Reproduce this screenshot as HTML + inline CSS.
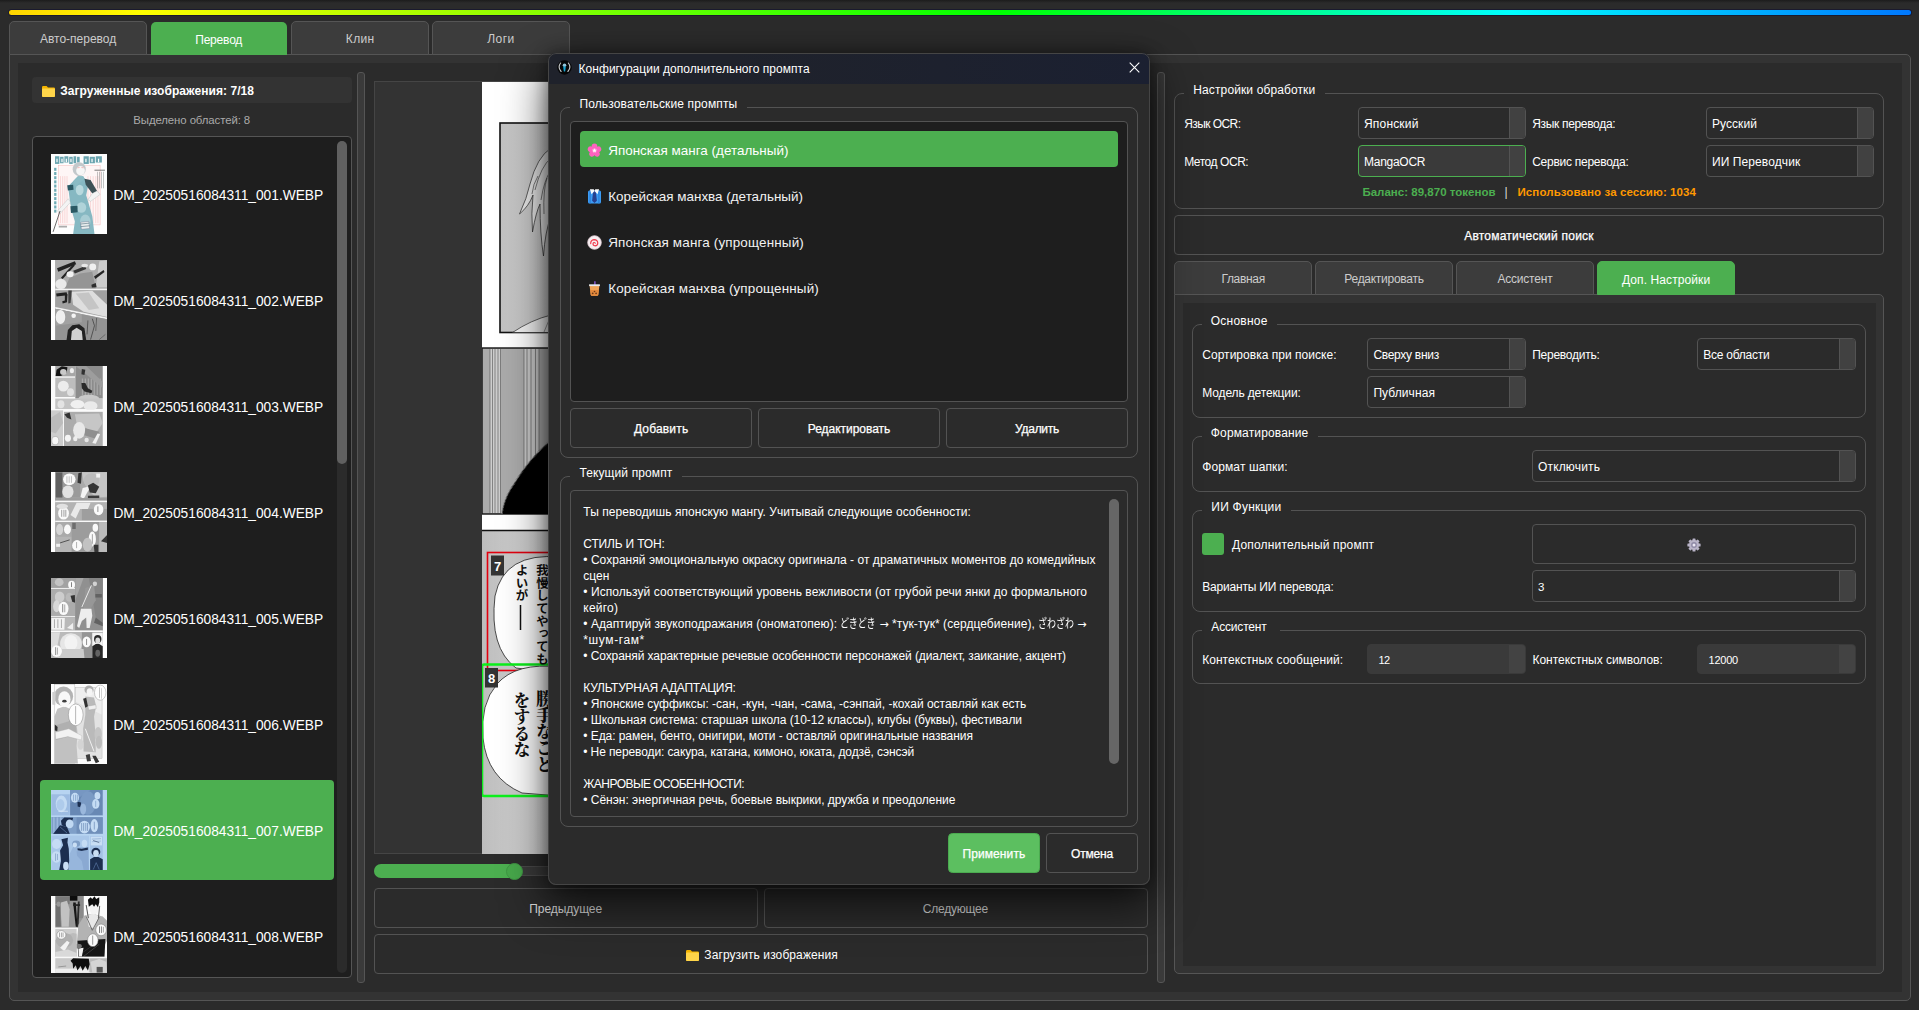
<!DOCTYPE html>
<html lang="ru"><head><meta charset="utf-8"><title>Manga Translator</title>
<style>
html,body{margin:0;padding:0;}
body{width:1919px;height:1010px;overflow:hidden;background:#2b2b2b;font-family:'Liberation Sans','Noto Sans CJK JP',sans-serif;position:relative;}
.a{position:absolute;box-sizing:border-box;}
.t{white-space:pre;}
.k{display:inline-block;width:35.6px;transform:scaleX(.75);transform-origin:0 50%;letter-spacing:0;}
.w{font-family:'DejaVu Sans',sans-serif;font-size:11px;letter-spacing:0;}
</style></head><body>
<div class="a" style="left:0px;top:0px;width:1919px;height:3px;background:linear-gradient(#1c1c1c,#2b2b2b);"></div>
<div class="a" style="left:8px;top:9px;width:1904px;height:7px;background:#1a1a2e;border-radius:3.5px;"></div>
<div class="a" style="left:9px;top:10px;width:1902px;height:5px;border-radius:2.5px;background:linear-gradient(90deg,#ffd400 0%,#ffff00 7%,#00ff00 52%,#00ffff 79%,#0078ff 100%);"></div>
<div class="a" style="left:9px;top:54px;width:1902px;height:947px;background:#333333;border:1px solid #555555;border-radius:5px;border-top-left-radius:0;"></div>
<div class="a" style="left:18px;top:63px;width:1884px;height:929px;background:#2b2b2b;"></div>
<div class="a" style="left:9px;top:21px;width:138px;height:34px;background:#3c3c3c;border:1px solid #555555;border-radius:5px 5px 0 0;"></div>
<div class="a t" style="top:28.5px;height:20px;line-height:20px;font-size:12px;color:#ccc;letter-spacing:-0.012px;left:40px;">Авто-перевод</div>
<div class="a" style="left:150.6px;top:21.6px;width:136.6px;height:33.4px;background:#4caf50;border-radius:5px 5px 0 0;"></div>
<div class="a t" style="top:29.5px;height:20px;line-height:20px;font-size:12px;color:#fff;letter-spacing:-0.185px;left:195.2px;">Перевод</div>
<div class="a" style="left:291px;top:21px;width:138px;height:34px;background:#3c3c3c;border:1px solid #555555;border-radius:5px 5px 0 0;"></div>
<div class="a t" style="top:28.5px;height:20px;line-height:20px;font-size:12px;color:#ccc;letter-spacing:0.357px;left:345.8px;">Клин</div>
<div class="a" style="left:432px;top:21px;width:138px;height:34px;background:#3c3c3c;border:1px solid #555555;border-radius:5px 5px 0 0;"></div>
<div class="a t" style="top:28.5px;height:20px;line-height:20px;font-size:12px;color:#ccc;letter-spacing:0.453px;left:487.2px;">Логи</div>
<div class="a" style="left:32px;top:77px;width:320px;height:26px;background:#333333;border-radius:4px;"></div>
<svg class="a" style="left:41.7px;top:85.5px" width="13" height="11" viewBox="0 0 13 11"><path d="M0 1.2Q0 0 1.2 0H4.6L6 1.4H11.8Q13 1.4 13 2.6V9.8Q13 11 11.8 11H1.2Q0 11 0 9.8Z" fill="#f5b400"/><path d="M0 3.2Q0 2.4 1 2.4H12Q13 2.4 13 3.2V9.8Q13 11 11.8 11H1.2Q0 11 0 9.8Z" fill="#ffd54a"/></svg>
<div class="a t" style="top:80.5px;height:20px;line-height:20px;font-size:12px;color:#fff;font-weight:700;letter-spacing:0.061px;left:60.2px;">Загруженные изображения: 7/18</div>
<div class="a t" style="top:110px;height:20px;line-height:20px;font-size:11.4px;color:#aaa;letter-spacing:-0.092px;left:133.3px;">Выделено областей: 8</div>
<div class="a" style="left:32px;top:136px;width:320px;height:842px;background:#1e1e1e;border:1px solid #555555;border-radius:4px;"></div>
<div class="a" style="left:337px;top:141px;width:10px;height:832px;background:#2b2b2b;border-radius:5px;"></div>
<div class="a" style="left:337px;top:141px;width:10px;height:323px;background:#606060;border-radius:5px;"></div>
<svg width="0" height="0" style="position:absolute"><defs><filter id="bl" x="-5%" y="-5%" width="110%" height="110%"><feGaussianBlur stdDeviation=".45"/></filter><clipPath id="tc"><rect width="56" height="80"/></clipPath></defs></svg>
<svg class="a" style="left:51px;top:154px;background:#fdfdfd" width="56" height="80" viewBox="0 0 56 80"><g clip-path="url(#tc)"><g filter="url(#bl)"><rect x="0.0" y="0.0" width="56.1" height="80.05" fill="#fdfdfd"/><rect x="7.32" y="11.67" width="41.81" height="59.24" fill="#fef6f6"/><g stroke="#f3b4b4" stroke-width=".45" fill="none"><rect x="7.32" y="11.67" width="41.81" height="59.23"/><path d="M9.49 22.13V69.16"/><path d="M11.67 22.13V69.16"/><path d="M13.85 22.13V69.16"/><path d="M16.03 22.13V69.16"/><path d="M36.93 22.13V69.16"/><path d="M39.55 22.13V69.16"/><path d="M42.16 22.13V69.16"/><path d="M44.77 22.13V69.16"/><path d="M46.95 22.13V69.16"/></g><g fill="#2f8190"><rect x="4.01" y="2.26" width="4.35" height="7.67" fill="#2f8190" opacity="0.72"/><rect x="9.06" y="2.79" width="3.48" height="6.44" fill="#2f8190" opacity="0.72"/><rect x="13.41" y="2.26" width="3.92" height="6.28" fill="#2f8190" opacity="0.72"/><rect x="18.21" y="2.79" width="3.48" height="7.14" fill="#2f8190" opacity="0.72"/><rect x="22.56" y="2.26" width="2.61" height="6.97" fill="#2f8190" opacity="0.72"/><rect x="26.05" y="2.79" width="2.61" height="5.75" fill="#2f8190" opacity="0.72"/><rect x="32.58" y="2.26" width="5.22" height="7.67" fill="#2f8190" opacity="0.72"/><rect x="38.68" y="2.79" width="5.22" height="6.44" fill="#2f8190" opacity="0.72"/><rect x="44.77" y="2.26" width="6.1" height="6.28" fill="#2f8190" opacity="0.72"/></g><g fill="#fdfdfd"><rect x="5.4" y="4.7" width="1.22" height="3.49" fill="#fdfdfd"/><rect x="10.37" y="4.7" width="1.22" height="3.49" fill="#fdfdfd"/><rect x="14.72" y="4.7" width="1.22" height="3.49" fill="#fdfdfd"/><rect x="19.34" y="4.7" width="1.22" height="3.49" fill="#fdfdfd"/><rect x="34.32" y="4.7" width="1.22" height="3.49" fill="#fdfdfd"/><rect x="40.42" y="4.7" width="1.22" height="3.49" fill="#fdfdfd"/><rect x="46.95" y="4.7" width="1.22" height="3.49" fill="#fdfdfd"/></g><g fill="#4a96a3"><rect x="3.14" y="13.85" width="2.26" height="2.96" fill="#4a96a3" opacity="0.8"/><rect x="3.14" y="18.03" width="2.26" height="2.96" fill="#4a96a3" opacity="0.8"/><rect x="3.14" y="22.21" width="2.26" height="2.96" fill="#4a96a3" opacity="0.8"/><rect x="3.14" y="26.39" width="2.26" height="2.97" fill="#4a96a3" opacity="0.8"/><rect x="3.14" y="30.57" width="2.26" height="2.97" fill="#4a96a3" opacity="0.8"/><rect x="3.14" y="34.76" width="2.26" height="2.96" fill="#4a96a3" opacity="0.8"/><rect x="3.14" y="38.94" width="2.26" height="2.96" fill="#4a96a3" opacity="0.8"/><rect x="3.14" y="43.12" width="2.26" height="2.96" fill="#4a96a3" opacity="0.8"/><rect x="3.14" y="47.3" width="2.26" height="2.96" fill="#4a96a3" opacity="0.8"/><rect x="3.14" y="51.48" width="2.26" height="2.96" fill="#4a96a3" opacity="0.8"/><rect x="3.14" y="55.66" width="2.26" height="2.96" fill="#4a96a3" opacity="0.8"/></g><rect x="46.08" y="17.77" width="0.78" height="16.55" fill="#777" opacity="0.55"/><rect x="48.08" y="17.77" width="0.79" height="16.55" fill="#777" opacity="0.55"/><rect x="50.09" y="17.77" width="0.78" height="16.55" fill="#777" opacity="0.55"/><rect x="52.09" y="17.77" width="0.78" height="16.55" fill="#777" opacity="0.55"/><rect x="43.47" y="15.59" width="10.45" height="1.31" fill="#555" opacity="0.6"/><ellipse cx="28.22" cy="15.16" rx="6.53" ry="6.97" fill="#c3c8cb"/><ellipse cx="29.53" cy="16.68" rx="4.36" ry="4.57" fill="#f6f6f6"/><polyline points="26.48,13.85 28.66,13.41" fill="none" stroke="#e55" stroke-width="0.4"/><polyline points="30.4,13.41 32.58,13.85" fill="none" stroke="#e55" stroke-width="0.4"/><polygon points="26.92,22.13 32.14,22.13 34.32,25.61 36.93,32.58 35.19,41.29 37.8,50.0 41.29,62.2 43.47,80.05 22.13,80.05 23.87,67.42 20.82,56.97 19.08,48.26 17.77,37.8 16.9,32.58 22.13,27.35" fill="#86b8c2"/><polygon points="22.13,27.35 26.92,22.13 32.14,22.13 33.45,24.74 24.74,32.58" fill="#8bbcc5"/><ellipse cx="28.66" cy="36.06" rx="3.92" ry="5.23" fill="#b9d9de"/><ellipse cx="30.4" cy="53.48" rx="4.79" ry="5.23" fill="#b0d3d9"/><ellipse cx="34.32" cy="67.42" rx="5.23" ry="6.97" fill="#a8cdd4"/><polygon points="33.45,24.74 39.55,26.05 46.08,36.93 41.29,39.55 34.76,30.84" fill="#3d5157"/><polygon points="16.2,31.27 22.13,30.84 22.56,35.63 16.9,36.5" fill="#2a5863"/><polygon points="19.34,52.18 26.48,51.74 26.66,58.28 19.95,58.89" fill="#2a5863"/><polygon points="41.29,39.55 46.08,36.93 49.13,40.42 39.55,47.39 36.93,45.64" fill="#f4f4f4" stroke="#9aa" stroke-width="0.3"/><polygon points="17.33,44.77 19.51,48.26 9.06,59.58 6.45,56.97" fill="#f4f4f4" stroke="#9aa" stroke-width="0.3"/><polyline points="2.09,77.87 9.06,56.97" fill="none" stroke="#444" stroke-width="0.8"/><polygon points="29.53,68.29 37.8,67.42 38.68,74.39 30.4,75.26" fill="#e9eeee" stroke="#557" stroke-width="0.3"/><polyline points="29.53,70.03 38.24,69.16" fill="none" stroke="#356" stroke-width="0.5"/><polyline points="29.79,72.65 38.5,71.78" fill="none" stroke="#356" stroke-width="0.5"/><rect x="7.75" y="71.78" width="8.28" height="1.74" fill="#777" opacity="0.6"/></g></g></svg>
<div class="a t" style="top:185.8px;height:20px;line-height:20px;font-size:13.75px;color:#fff;letter-spacing:-0.007px;left:113.4px;">DM_20250516084311_001.WEBP</div>
<svg class="a" style="left:51px;top:260px;background:#a2a2a2" width="56" height="80" viewBox="0 0 56 80"><g clip-path="url(#tc)"><g filter="url(#bl)"><rect x="0.0" y="0.0" width="56.1" height="80.05" fill="#a2a2a2"/><rect x="0.0" y="0.0" width="4.27" height="80.05" fill="#fff"/><rect x="4.27" y="0.0" width="51.83" height="28.92" fill="#a9a9a9"/><polygon points="13.41,28.92 18.64,17.77 29.09,13.41 41.29,11.67 44.77,28.92" fill="#8f8f8f"/><polygon points="48.26,1.22 56.1,0.35 56.1,27.35 44.77,27.35" fill="#c9c9c9"/><polygon points="6.01,8.19 23.87,1.22 25.17,4.27 7.32,11.67" fill="#161616"/><polygon points="9.93,17.77 22.13,4.27 23.87,5.57 11.67,19.08" fill="#161616"/><polygon points="22.13,10.8 34.32,6.01 35.19,9.06 23.87,13.41" fill="#2a2a2a"/><ellipse cx="19.08" cy="14.29" rx="3.48" ry="3.05" fill="#f2f2f2"/><ellipse cx="41.72" cy="6.88" rx="3.48" ry="3.48" fill="#f0f0f0"/><ellipse cx="33.67" cy="5.57" rx="3.27" ry="1.74" fill="#e6e6e6"/><ellipse cx="9.93" cy="24.09" rx="5.66" ry="5.01" fill="#e9e9e9"/><polygon points="43.03,16.46 52.61,9.93 53.48,12.11 44.34,19.08" fill="#1a1a1a"/><polygon points="40.42,24.74 44.77,23.0 45.64,27.35 40.85,27.53" fill="#222"/><rect x="4.27" y="28.66" width="51.83" height="1.74" fill="#f4f4f4"/><polygon points="4.27,30.4 56.1,30.4 56.1,58.28 4.27,47.39" fill="#9c9c9c"/><polygon points="20.38,31.71 41.29,30.84 56.1,44.77 56.1,56.97 32.58,51.74 22.13,44.77" fill="#dcdcdc"/><polygon points="24.74,33.45 37.8,32.58 48.26,48.26 37.8,50.0" fill="#c2c2c2"/><polygon points="5.14,33.45 15.59,32.14 16.46,35.19 5.57,36.5" fill="#151515"/><polygon points="13.85,34.32 16.46,34.32 16.03,42.16 11.67,43.47 11.24,41.29 13.85,40.42" fill="#151515"/><polygon points="17.33,30.4 20.82,30.4 19.51,43.03 17.33,43.47" fill="#333"/><polygon points="4.27,46.95 56.1,57.4 56.1,59.15 4.27,48.69" fill="#f2f2f2"/><polygon points="4.27,48.69 56.1,59.15 56.1,80.05 4.27,80.05" fill="#8e8e8e"/><polygon points="4.27,48.69 30.84,54.18 30.84,62.2 4.27,65.68" fill="#9d9d9d"/><ellipse cx="9.49" cy="56.97" rx="4.79" ry="6.97" fill="#efefef"/><ellipse cx="22.65" cy="55.75" rx="2.26" ry="2.26" fill="#f4f4f4"/><polygon points="15.59,80.05 16.9,70.03 21.25,65.24 28.22,64.37 33.45,68.29 35.19,80.05" fill="#141414"/><polygon points="19.95,80.05 20.82,70.91 25.61,67.86 30.84,70.91 31.71,80.05" fill="#cfcfcf"/><polyline points="36.93,60.45 36.06,74.39" fill="none" stroke="#222" stroke-width="0.6"/><polyline points="41.29,58.71 43.47,65.68 39.55,79.62" fill="none" stroke="#2a2a2a" stroke-width="0.7"/><polyline points="45.64,57.84 44.77,70.91" fill="none" stroke="#333" stroke-width="0.6"/><polyline points="48.26,79.62 54.36,74.39" fill="none" stroke="#333" stroke-width="0.5"/><rect width="56" height="80" fill="#fff" opacity="0.06"/></g></g></svg>
<div class="a t" style="top:291.8px;height:20px;line-height:20px;font-size:13.75px;color:#fff;letter-spacing:-0.007px;left:113.4px;">DM_20250516084311_002.WEBP</div>
<svg class="a" style="left:51px;top:366px;background:#fbfbfb" width="56" height="80" viewBox="0 0 56 80"><g clip-path="url(#tc)"><g filter="url(#bl)"><rect x="0.0" y="0.0" width="56.1" height="80.05" fill="#fbfbfb"/><rect x="4.27" y="0.0" width="19.77" height="10.37" fill="#a6a6a6"/><polygon points="4.7,9.93 5.57,3.83 10.8,0.35 16.46,1.22 15.59,6.45 9.93,10.1" fill="#151515"/><ellipse cx="12.33" cy="6.01" rx="3.27" ry="3.05" fill="#c9c9c9"/><ellipse cx="20.91" cy="4.7" rx="2.09" ry="2.61" fill="#efefef"/><rect x="4.27" y="11.67" width="19.77" height="19.34" fill="#bdbdbd"/><ellipse cx="12.33" cy="20.17" rx="5.44" ry="5.44" fill="#ececec"/><ellipse cx="19.51" cy="26.05" rx="3.48" ry="3.92" fill="#e2e2e2"/><rect x="24.3" y="0.0" width="27.44" height="32.58" fill="#8c8c8c"/><rect x="30.84" y="12.54" width="1.22" height="16.55" fill="#a9a9a9"/><rect x="33.8" y="12.54" width="1.22" height="16.55" fill="#a9a9a9"/><rect x="36.76" y="12.54" width="1.22" height="16.55" fill="#a9a9a9"/><rect x="39.72" y="12.54" width="1.22" height="16.55" fill="#a9a9a9"/><rect x="42.68" y="12.54" width="1.22" height="16.55" fill="#a9a9a9"/><rect x="45.64" y="12.54" width="1.22" height="16.55" fill="#a9a9a9"/><rect x="48.61" y="12.54" width="1.22" height="16.55" fill="#a9a9a9"/><polygon points="24.3,0.0 35.19,0.0 51.74,16.03 51.74,22.13 30.84,4.7" fill="#9d9d9d"/><polygon points="30.4,16.9 34.32,16.9 36.93,22.13 41.29,24.74 40.42,27.35 33.45,25.61 30.84,22.13" fill="#2b2b2b"/><polygon points="30.84,2.96 34.32,3.83 33.45,9.06 30.4,8.19" fill="#333"/><ellipse cx="37.8" cy="32.8" rx="10.45" ry="4.14" fill="#c9c9c9"/><rect x="4.27" y="32.58" width="47.47" height="10.45" fill="#c4c4c4"/><ellipse cx="26.48" cy="38.24" rx="6.97" ry="4.36" fill="#f0f0f0"/><ellipse cx="39.55" cy="39.98" rx="6.97" ry="4.79" fill="#eaeaea"/><ellipse cx="9.93" cy="38.24" rx="3.48" ry="3.92" fill="#e3e3e3"/><rect x="0.0" y="43.73" width="56.1" height="1.57" fill="#fbfbfb"/><rect x="0.0" y="44.34" width="12.11" height="35.71" fill="#cdcdcd"/><polygon points="0.0,51.74 9.06,45.64 12.11,56.97 4.7,67.42 0.0,65.68" fill="#bcbcbc"/><ellipse cx="4.27" cy="74.61" rx="3.48" ry="4.14" fill="#f7f7f7" stroke="#999" stroke-width=".5"/><rect x="12.98" y="45.82" width="38.76" height="34.23" fill="#acacac"/><polygon points="23.87,48.26 48.26,47.39 51.74,56.97 44.77,67.42 25.61,56.97" fill="#c6c6c6"/><ellipse cx="28.22" cy="64.37" rx="6.1" ry="8.28" fill="#e8e8e8"/><polygon points="13.41,48.26 18.64,46.52 20.38,53.48 16.03,51.74" fill="#333"/><polygon points="34.32,62.2 48.26,65.68 44.77,72.65 33.45,69.16" fill="#8f8f8f"/><ellipse cx="16.9" cy="72.21" rx="3.05" ry="3.48" fill="#f5f5f5"/><ellipse cx="24.3" cy="72.65" rx="2.18" ry="2.61" fill="#ededed"/><ellipse cx="35.63" cy="73.95" rx="2.18" ry="2.18" fill="#e6e6e6"/><polygon points="41.29,77.0 46.52,67.42 49.13,68.29 44.77,77.87" fill="#f0f0f0"/></g></g></svg>
<div class="a t" style="top:397.8px;height:20px;line-height:20px;font-size:13.75px;color:#fff;letter-spacing:-0.007px;left:113.4px;">DM_20250516084311_003.WEBP</div>
<svg class="a" style="left:51px;top:472px;background:#a0a0a0" width="56" height="80" viewBox="0 0 56 80"><g clip-path="url(#tc)"><g filter="url(#bl)"><rect x="0.0" y="0.0" width="56.1" height="80.05" fill="#a0a0a0"/><rect x="0.0" y="0.0" width="4.27" height="80.05" fill="#fff"/><rect x="4.27" y="0.0" width="51.83" height="28.66" fill="#9e9e9e"/><rect x="4.7" y="0.35" width="6.97" height="25.26" fill="#474747"/><rect x="11.67" y="0.35" width="17.42" height="25.26" fill="#8a8a8a"/><ellipse cx="18.34" cy="7.32" rx="6.23" ry="5.92" fill="#fafafa"/><rect x="15.59" y="4.27" width="0.7" height="6.53" fill="#999"/><rect x="17.77" y="4.27" width="0.7" height="6.53" fill="#999"/><rect x="19.95" y="4.27" width="0.69" height="6.53" fill="#999"/><ellipse cx="16.9" cy="19.73" rx="5.66" ry="6.32" fill="#dedede"/><polygon points="30.84,0.35 56.1,0.35 56.1,24.74 44.77,25.61 36.93,17.77 32.58,9.06" fill="#bdbdbd"/><ellipse cx="40.42" cy="8.62" rx="7.84" ry="7.4" fill="#b2b2b2"/><polygon points="27.35,1.22 30.84,0.35 29.97,11.67 26.48,10.8" fill="#151515"/><polygon points="36.93,13.41 42.16,10.8 48.26,14.72 44.77,21.25 38.68,20.38" fill="#141414"/><polygon points="36.93,23.87 48.26,23.43 48.26,27.53 36.93,27.53" fill="#1a1a1a"/><polygon points="29.53,24.74 31.71,16.03 36.93,14.72 37.8,17.77 32.58,26.92" fill="#f3f3f3"/><rect x="45.21" y="1.66" width="3.92" height="3.91" fill="#f1f1f1"/><rect x="4.27" y="26.05" width="51.83" height="2.61" fill="#8d8d8d"/><rect x="4.27" y="28.66" width="51.83" height="1.74" fill="#f7f7f7"/><rect x="4.27" y="30.4" width="51.83" height="18.29" fill="#a7a7a7"/><rect x="30.84" y="36.93" width="25.26" height="11.33" fill="#8f8f8f"/><ellipse cx="12.54" cy="41.29" rx="5.4" ry="6.27" fill="#fafafa"/><rect x="10.37" y="37.8" width="0.78" height="6.97" fill="#777"/><rect x="12.54" y="37.8" width="0.79" height="6.97" fill="#777"/><rect x="14.46" y="37.8" width="0.78" height="6.97" fill="#777"/><ellipse cx="47.6" cy="37.54" rx="4.75" ry="5.66" fill="#fafafa"/><rect x="46.34" y="34.32" width="1.05" height="5.66" fill="#888"/><polygon points="19.51,43.03 25.61,30.84 39.55,30.84 36.93,36.93 29.09,36.93 24.74,46.52" fill="#e6e6e6"/><ellipse cx="11.24" cy="34.32" rx="5.66" ry="2.61" fill="#dcdcdc"/><rect x="4.27" y="48.69" width="51.83" height="1.48" fill="#f7f7f7"/><rect x="4.27" y="50.17" width="51.83" height="29.88" fill="#9c9c9c"/><rect x="20.82" y="50.17" width="27.44" height="29.88" fill="#8c8c8c"/><rect x="48.26" y="50.17" width="7.84" height="29.88" fill="#b2b2b2"/><rect x="4.27" y="64.81" width="16.11" height="15.24" fill="#a9a9a9"/><ellipse cx="8.62" cy="57.4" rx="3.48" ry="5.66" fill="#cfcfcf"/><ellipse cx="16.46" cy="57.4" rx="3.48" ry="4.79" fill="#f8f8f8"/><ellipse cx="44.34" cy="55.75" rx="2.79" ry="4.01" fill="#f8f8f8"/><ellipse cx="41.29" cy="66.99" rx="3.66" ry="7.58" fill="#f8f8f8"/><ellipse cx="26.05" cy="73.52" rx="4.97" ry="5.4" fill="#f8f8f8"/><rect x="40.85" y="62.2" width="1.05" height="9.58" fill="#999"/><rect x="25.17" y="70.03" width="0.88" height="6.1" fill="#999"/><ellipse cx="36.5" cy="72.65" rx="4.79" ry="6.97" fill="#b9b9b9"/><polygon points="42.6,72.65 47.39,72.65 47.39,80.05 43.47,80.05" fill="#141414"/><polygon points="50.0,69.16 56.1,63.07 56.1,70.91" fill="#141414"/><polyline points="9.06,70.91 18.64,67.86" fill="none" stroke="#1a1a1a" stroke-width="0.8"/><rect x="5.14" y="71.78" width="3.92" height="3.05" fill="#eee"/><rect x="21.25" y="50.87" width="3.49" height="6.1" fill="#555"/><rect width="56" height="80" fill="#fff" opacity="0.14"/></g></g></svg>
<div class="a t" style="top:503.79999999999995px;height:20px;line-height:20px;font-size:13.75px;color:#fff;letter-spacing:-0.007px;left:113.4px;">DM_20250516084311_004.WEBP</div>
<svg class="a" style="left:51px;top:578px;background:#9a9a9a" width="56" height="80" viewBox="0 0 56 80"><g clip-path="url(#tc)"><g filter="url(#bl)"><rect x="0.0" y="0.0" width="56.1" height="80.05" fill="#9a9a9a"/><rect x="51.74" y="0.0" width="4.36" height="80.05" fill="#fff"/><rect x="0.0" y="0.0" width="24.04" height="9.93" fill="#9b9b9b"/><ellipse cx="8.19" cy="4.27" rx="4.36" ry="3.92" fill="#bfbfbf"/><ellipse cx="20.6" cy="6.71" rx="3.44" ry="3.92" fill="#fafafa"/><rect x="20.12" y="4.27" width="0.87" height="4.79" fill="#666"/><rect x="0.0" y="9.93" width="24.04" height="1.05" fill="#eee"/><rect x="0.0" y="10.98" width="24.04" height="27.0" fill="#a5a5a5"/><ellipse cx="8.62" cy="19.08" rx="4.79" ry="5.66" fill="#c9c9c9"/><ellipse cx="18.42" cy="19.29" rx="3.7" ry="4.57" fill="#b5b5b5"/><polygon points="19.51,17.77 23.87,16.9 24.04,24.74 21.25,23.87" fill="#222"/><ellipse cx="5.57" cy="28.22" rx="3.48" ry="6.1" fill="#d6d6d6"/><ellipse cx="12.54" cy="30.4" rx="4.97" ry="6.71" fill="#fafafa"/><rect x="11.24" y="26.05" width="0.96" height="8.27" fill="#777"/><rect x="13.41" y="26.48" width="0.79" height="7.84" fill="#888"/><rect x="0.0" y="37.98" width="24.04" height="1.13" fill="#e8e8e8"/><rect x="0.0" y="39.11" width="24.04" height="13.33" fill="#b2b2b2"/><polygon points="0.35,39.98 13.85,39.98 13.41,51.74 0.35,51.74" fill="#f1f1f1"/><rect x="2.96" y="41.29" width="0.87" height="8.71" fill="#999"/><rect x="6.45" y="41.29" width="0.87" height="8.71" fill="#999"/><rect x="9.93" y="41.29" width="0.87" height="8.71" fill="#999"/><polygon points="16.03,50.0 22.13,44.77 22.13,51.74" fill="#eee"/><rect x="24.3" y="0.0" width="27.44" height="52.44" fill="#878787"/><polygon points="24.3,0.0 32.58,0.0 24.3,22.13" fill="#a0a0a0"/><polygon points="37.8,0.0 51.74,0.0 51.74,44.77 44.77,39.55" fill="#7a7a7a"/><polygon points="34.32,9.93 43.03,7.32 44.77,22.13 39.55,30.84 32.58,30.84" fill="#8f8f8f"/><ellipse cx="43.9" cy="5.79" rx="2.18" ry="2.4" fill="#cfcfcf"/><polyline points="40.42,7.32 30.84,29.09" fill="none" stroke="#f0f0f0" stroke-width="0.9"/><rect x="44.34" y="16.03" width="6.53" height="3.48" fill="#555"/><polygon points="29.97,30.84 40.42,30.84 41.29,37.8 38.68,50.0 35.63,50.0 35.19,39.55 30.84,43.03 28.22,50.0 26.05,48.26" fill="#ededed"/><polygon points="44.77,39.55 51.74,44.77 51.74,48.26 43.03,44.77" fill="#555"/><rect x="0.0" y="52.44" width="51.74" height="1.74" fill="#fafafa"/><rect x="0.0" y="54.18" width="51.74" height="25.87" fill="#b5b5b5"/><polygon points="0.0,54.18 9.06,54.18 6.45,67.42 0.0,70.91" fill="#d9d9d9"/><rect x="30.84" y="54.18" width="10.45" height="25.87" fill="#8d8d8d"/><ellipse cx="19.95" cy="65.68" rx="10.89" ry="10.45" fill="#e4e4e4"/><ellipse cx="19.95" cy="64.81" rx="6.53" ry="7.84" fill="#f2f2f2"/><polygon points="6.45,80.05 9.93,70.91 32.58,70.91 33.45,80.05" fill="#c8c8c8"/><ellipse cx="35.67" cy="63.94" rx="4.14" ry="5.4" fill="#fafafa"/><rect x="35.19" y="60.89" width="0.87" height="6.1" fill="#777"/><ellipse cx="5.57" cy="73.08" rx="5.4" ry="5.84" fill="#fafafa"/><rect x="4.27" y="69.16" width="0.87" height="7.84" fill="#777"/><rect x="6.01" y="69.6" width="0.78" height="6.97" fill="#999"/><rect x="41.29" y="55.05" width="10.45" height="25.0" fill="#f3f3f3"/><ellipse cx="46.73" cy="61.11" rx="3.7" ry="4.14" fill="#1a1a1a"/><ellipse cx="46.73" cy="62.63" rx="2.4" ry="3.05" fill="#d9d9d9"/><polygon points="41.29,80.05 41.29,68.29 44.77,66.11 48.26,66.11 51.74,68.29 51.74,80.05" fill="#141414"/><ellipse cx="46.73" cy="75.26" rx="2.4" ry="3.48" fill="#555"/><rect width="56" height="80" fill="#fff" opacity="0.08"/></g></g></svg>
<div class="a t" style="top:609.8px;height:20px;line-height:20px;font-size:13.75px;color:#fff;letter-spacing:-0.007px;left:113.4px;">DM_20250516084311_005.WEBP</div>
<svg class="a" style="left:51px;top:684px;background:#fcfcfc" width="56" height="80" viewBox="0 0 56 80"><g clip-path="url(#tc)"><g filter="url(#bl)"><rect x="0.0" y="0.0" width="56.1" height="80.05" fill="#fcfcfc"/><rect x="24.74" y="3.83" width="26.31" height="70.56" fill="#dedede"/><polygon points="24.74,3.83 51.05,3.83 51.05,30.84 24.74,17.77" fill="#ececec"/><g fill="none" stroke="#888" stroke-width=".3"><rect x="3.4" y="0.35" width="20.47" height="79.27"/><rect x="24.74" y="3.83" width="26.31" height="70.56"/></g><polygon points="3.4,79.62 3.4,32.58 6.45,24.74 13.41,22.13 18.64,24.74 24.74,33.45 26.48,48.26 25.61,62.2 26.92,79.62" fill="#b9b9b9"/><polygon points="4.7,41.29 18.64,36.93 24.74,41.29 26.05,51.74 17.77,52.61 4.7,56.1" fill="#a6a6a6"/><polygon points="4.27,48.26 17.77,44.77 30.84,51.74 30.4,56.1 16.9,52.61 4.7,55.23" fill="#f1f1f1" stroke="#999" stroke-width="0.3"/><polygon points="3.83,40.42 6.62,43.03 6.27,46.95 3.83,46.52" fill="#111"/><ellipse cx="12.54" cy="12.33" rx="9.58" ry="9.8" fill="#a9a9a9"/><ellipse cx="13.41" cy="15.16" rx="6.1" ry="7.84" fill="#f7f7f7"/><ellipse cx="13.41" cy="17.16" rx="2.18" ry="1.31" fill="#222"/><polygon points="1.22,8.19 4.7,7.32 4.27,21.25 1.22,20.38" fill="#c9c9c9"/><ellipse cx="24.74" cy="30.84" rx="7.4" ry="10.89" fill="#fdfdfd" stroke="#777" stroke-width=".5"/><rect x="24.3" y="22.13" width="0.79" height="17.85" fill="#999"/><ellipse cx="38.02" cy="5.66" rx="4.57" ry="4.27" fill="#a2a2a2"/><ellipse cx="38.68" cy="7.97" rx="3.05" ry="3.7" fill="#f4f4f4"/><polygon points="34.32,12.54 43.03,13.41 45.21,22.13 43.03,32.58 44.34,48.26 44.77,68.29 32.58,67.42 32.14,44.77 34.32,30.84" fill="#b1b1b1"/><polygon points="32.14,14.72 35.19,13.85 36.93,22.13 34.32,23.69" fill="#141414"/><polygon points="36.93,22.13 44.77,20.82 45.21,24.74 37.8,26.05" fill="#eee" stroke="#888" stroke-width="0.3"/><polyline points="34.32,44.77 43.03,67.42" fill="none" stroke="#f6f6f6" stroke-width="0.9"/><polygon points="34.76,70.91 38.68,70.03 39.98,77.0 36.06,77.44" fill="#222"/><polygon points="41.29,71.78 44.77,71.78 48.26,77.87 44.77,79.18" fill="#1a1a1a"/><ellipse cx="49.22" cy="8.62" rx="5.75" ry="7.58" fill="#fdfdfd" stroke="#888" stroke-width=".5"/><rect x="48.26" y="3.4" width="0.69" height="10.45" fill="#999"/><rect x="50.17" y="4.27" width="0.61" height="10.45" fill="#aaa"/><ellipse cx="47.17" cy="50.0" rx="3.7" ry="6.97" fill="#bdbdbd"/><ellipse cx="47.91" cy="58.28" rx="3.14" ry="6.53" fill="#b4b4b4"/><ellipse cx="29.53" cy="60.45" rx="3.05" ry="5.23" fill="#cfcfcf"/><rect width="56" height="80" fill="#fff" opacity="0.12"/></g></g></svg>
<div class="a t" style="top:715.8px;height:20px;line-height:20px;font-size:13.75px;color:#fff;letter-spacing:-0.007px;left:113.4px;">DM_20250516084311_006.WEBP</div>
<div class="a" style="left:40px;top:780px;width:294px;height:100px;background:#4caf50;border-radius:4px;"></div>
<svg class="a" style="left:51px;top:790px;background:#b7d4f1" width="56" height="80" viewBox="0 0 56 80"><g clip-path="url(#tc)"><g filter="url(#bl)"><rect x="0.0" y="0.0" width="56.1" height="80.05" fill="#b7d4f1"/><rect x="0.35" y="4.27" width="18.47" height="21.34" fill="#9dbce2"/><ellipse cx="10.37" cy="13.85" rx="5.66" ry="8.28" fill="#c3dbf3"/><ellipse cx="9.49" cy="14.72" rx="3.92" ry="5.66" fill="#aecbeb"/><polyline points="7.32,21.25 16.9,21.25" fill="none" stroke="#dbe9f7" stroke-width="0.8"/><rect x="19.08" y="0.0" width="32.66" height="25.61" fill="#6888b4"/><polygon points="19.08,0.0 39.55,0.0 19.08,13.41" fill="#7797c2"/><ellipse cx="36.93" cy="12.98" rx="7.84" ry="11.76" fill="#7a9ac4"/><ellipse cx="23.95" cy="7.75" rx="4.01" ry="4.97" fill="#c5dcf4"/><rect x="22.13" y="4.7" width="0.69" height="6.1" fill="#7f9fc8"/><rect x="24.04" y="4.7" width="0.7" height="6.1" fill="#7f9fc8"/><rect x="25.87" y="4.7" width="0.7" height="6.1" fill="#7f9fc8"/><ellipse cx="46.39" cy="5.66" rx="2.92" ry="3.57" fill="#c5dcf4"/><ellipse cx="44.77" cy="13.94" rx="3.66" ry="4.88" fill="#c5dcf4"/><rect x="44.43" y="10.8" width="0.69" height="6.1" fill="#7f9fc8"/><polygon points="26.48,11.67 30.14,12.54 29.53,17.33 26.66,16.46" fill="#1b2d4f"/><ellipse cx="32.14" cy="19.08" rx="3.05" ry="5.66" fill="#9ab7dc"/><rect x="0.0" y="25.61" width="51.74" height="1.39" fill="#b7d4f1"/><rect x="0.35" y="27.0" width="51.39" height="16.9" fill="#7f9fc8"/><rect x="2.09" y="27.35" width="1.57" height="16.38" fill="#9bb8dd"/><rect x="5.57" y="27.35" width="1.57" height="16.38" fill="#9bb8dd"/><rect x="9.06" y="27.35" width="1.57" height="16.38" fill="#9bb8dd"/><rect x="25.61" y="27.35" width="26.13" height="16.38" fill="#6f8fba"/><polygon points="9.93,30.84 13.41,27.53 22.13,27.79 21.25,30.84 17.77,32.58 15.16,36.93 10.8,35.19" fill="#1b2d4f"/><ellipse cx="18.64" cy="33.89" rx="3.92" ry="4.36" fill="#c0d8f2"/><polygon points="2.09,43.9 9.06,35.19 16.03,36.93 18.82,43.9" fill="#1b2d4f"/><polyline points="9.06,36.93 16.03,43.03" fill="none" stroke="#7f9fc8" stroke-width="0.5"/><ellipse cx="33.45" cy="37.06" rx="5.4" ry="6.4" fill="#c5dcf4"/><rect x="30.4" y="33.01" width="0.7" height="7.84" fill="#6888b4"/><rect x="32.4" y="33.01" width="0.7" height="7.84" fill="#6888b4"/><rect x="34.49" y="33.01" width="0.7" height="7.84" fill="#6888b4"/><rect x="36.32" y="33.01" width="0.7" height="7.84" fill="#6888b4"/><ellipse cx="43.34" cy="35.63" rx="3.79" ry="6.71" fill="#c5dcf4"/><rect x="42.86" y="31.71" width="0.69" height="7.84" fill="#6888b4"/><rect x="0.0" y="43.9" width="51.74" height="1.74" fill="#b7d4f1"/><rect x="0.35" y="45.64" width="37.89" height="34.41" fill="#a9c7e9"/><polygon points="17.77,80.05 18.64,63.94 22.13,56.97 38.24,56.97 38.24,80.05" fill="#97b6dc"/><ellipse cx="5.57" cy="53.92" rx="4.53" ry="4.97" fill="#c5dcf4"/><ellipse cx="5.31" cy="66.99" rx="4.79" ry="5.84" fill="#c5dcf4"/><rect x="4.27" y="63.5" width="0.78" height="7.41" fill="#7f9fc8"/><rect x="6.27" y="63.94" width="0.7" height="6.09" fill="#7f9fc8"/><polygon points="10.37,49.13 16.9,47.82 16.46,52.61 17.77,58.71 18.21,70.91 17.33,80.05 8.19,80.05 9.93,70.91 9.06,60.45 12.11,55.23" fill="#1b2d4f"/><ellipse cx="14.94" cy="75.91" rx="2.83" ry="4.14" fill="#c9def4"/><ellipse cx="25.17" cy="53.7" rx="3.92" ry="3.27" fill="#7f9fc8"/><ellipse cx="23.87" cy="55.01" rx="2.18" ry="2.4" fill="#c9def4"/><polygon points="26.48,58.28 30.84,58.71 36.93,57.4 36.76,60.02 30.84,60.89 26.66,60.28" fill="#1b2d4f"/><polygon points="25.61,61.32 36.93,60.45 37.8,80.05 32.58,80.05 30.84,70.91 26.05,65.68" fill="#8aa9d2"/><ellipse cx="33.45" cy="53.48" rx="2.79" ry="3.66" fill="#c5dcf4"/><rect x="38.24" y="45.64" width="0.87" height="34.41" fill="#b7d4f1"/><rect x="39.11" y="46.08" width="12.63" height="33.97" fill="#a4c2e6"/><rect x="39.72" y="46.69" width="11.33" height="8.71" fill="#c9def4"/><polyline points="40.85,49.13 50.0,48.69" fill="none" stroke="#7f9fc8" stroke-width="0.6"/><polyline points="40.85,51.74 50.0,51.05" fill="none" stroke="#7f9fc8" stroke-width="0.5"/><polyline points="42.16,50.44 48.26,52.61" fill="none" stroke="#1b2d4f" stroke-width="0.5"/><ellipse cx="44.86" cy="61.89" rx="4.44" ry="4.22" fill="#1b2d4f"/><ellipse cx="44.99" cy="63.37" rx="2.83" ry="3.35" fill="#c9def4"/><polygon points="39.11,80.05 39.11,69.16 43.03,66.99 47.39,66.99 51.74,69.16 51.74,80.05" fill="#1b2d4f"/><polyline points="42.16,79.62 45.21,72.65 48.26,79.62" fill="none" stroke="#5f7fab" stroke-width="0.6"/></g></g></svg>
<div class="a t" style="top:821.8px;height:20px;line-height:20px;font-size:13.75px;color:#fff;letter-spacing:-0.007px;left:113.4px;">DM_20250516084311_007.WEBP</div>
<div class="a" style="left:33px;top:886px;width:318px;height:87px;overflow:hidden;"><div class="a" style="left:-33px;top:-886px;width:400px;height:1010px;">
<svg class="a" style="left:51px;top:896px;background:#fbfbfb" width="56" height="80" viewBox="0 0 56 80"><g clip-path="url(#tc)"><g filter="url(#bl)"><rect x="0.0" y="0.0" width="56.1" height="76.57" fill="#fbfbfb"/><rect x="4.27" y="0.0" width="28.31" height="31.71" fill="#979797"/><rect x="4.7" y="0.35" width="13.94" height="7.84" fill="#7a7a7a"/><rect x="18.82" y="0.0" width="7.84" height="4.7" fill="#111"/><rect x="26.66" y="0.0" width="5.92" height="22.13" fill="#8a8a8a"/><polygon points="9.93,6.45 16.03,4.7 18.64,13.41 17.77,30.84 10.8,30.84 9.93,17.77" fill="#c2c2c2"/><polygon points="4.7,9.06 9.06,6.45 9.93,30.84 4.7,30.84" fill="#6f6f6f"/><ellipse cx="7.67" cy="8.19" rx="2.26" ry="2.61" fill="#999"/><polygon points="22.13,6.45 24.74,6.45 26.48,30.84 24.74,30.84" fill="#161616"/><polygon points="26.92,5.57 28.66,5.57 27.53,30.84 25.61,30.84" fill="#2a2a2a"/><rect x="22.13" y="8.19" width="6.96" height="1.74" fill="#222"/><rect x="4.27" y="31.71" width="21.34" height="1.3" fill="#f5f5f5"/><polygon points="25.61,50.0 27.35,29.09 33.45,19.51 41.29,17.77 51.74,20.38 56.1,24.74 56.1,44.77 51.74,51.74" fill="#b3b3b3"/><polygon points="35.19,19.51 41.29,17.77 48.26,19.95 43.03,32.58 37.8,30.84" fill="#e8e8e8"/><polyline points="35.19,20.38 41.29,34.32 48.26,21.25" fill="none" stroke="#666" stroke-width="0.9"/><ellipse cx="43.03" cy="12.54" rx="4.36" ry="6.1" fill="#f3f3f3"/><polygon points="37.8,10.8 36.93,3.83 39.55,1.22 41.29,2.96 43.47,0.17 45.21,2.96 48.26,1.22 48.26,6.45 46.95,11.24 44.77,8.19 43.03,10.8 41.29,8.19" fill="#111"/><polyline points="35.19,9.06 37.37,22.13" fill="none" stroke="#555" stroke-width="1"/><polyline points="48.69,9.93 47.39,22.13" fill="none" stroke="#666" stroke-width="1"/><polygon points="26.48,44.77 54.36,43.03 53.48,61.32 27.35,61.32" fill="#151515"/><polyline points="32.58,60.45 48.26,48.26" fill="none" stroke="#666" stroke-width="0.5"/><polyline points="30.84,56.97 44.77,47.39" fill="none" stroke="#555" stroke-width="0.4"/><polygon points="27.35,52.61 32.58,51.74 30.84,60.45 27.79,60.45" fill="#f2f2f2"/><ellipse cx="27.13" cy="50.22" rx="3.7" ry="2.4" fill="#777"/><ellipse cx="50.09" cy="33.89" rx="5.31" ry="5.84" fill="#fbfbfb" stroke="#777" stroke-width=".5"/><rect x="48.26" y="30.4" width="0.78" height="6.53" fill="#555"/><rect x="50.17" y="30.4" width="0.7" height="6.53" fill="#666"/><rect x="51.92" y="30.84" width="0.61" height="5.66" fill="#777"/><ellipse cx="41.81" cy="44.21" rx="5.31" ry="6.4" fill="#fbfbfb" stroke="#777" stroke-width=".5"/><rect x="41.29" y="39.55" width="0.87" height="9.14" fill="#888"/><rect x="4.27" y="33.01" width="21.34" height="27.62" fill="#cdcdcd"/><polygon points="4.27,44.77 13.41,39.55 22.13,36.93 25.61,37.8 25.61,60.63 4.27,60.63" fill="#bcbcbc"/><ellipse cx="13.41" cy="44.34" rx="8.71" ry="7.4" fill="#b0b0b0"/><polygon points="9.06,51.74 16.03,44.77 18.64,46.52 13.41,55.23" fill="#f3f3f3"/><polygon points="4.27,56.1 16.9,53.48 25.61,56.97 25.61,60.63 4.27,60.63" fill="#d9d9d9"/><ellipse cx="10.37" cy="38.89" rx="4.53" ry="4.31" fill="#fbfbfb" stroke="#777" stroke-width=".5"/><rect x="8.19" y="36.5" width="0.7" height="4.79" fill="#888"/><rect x="9.93" y="36.5" width="0.7" height="4.79" fill="#888"/><rect x="11.67" y="36.5" width="0.7" height="4.79" fill="#888"/><rect x="4.27" y="60.63" width="51.83" height="1.57" fill="#f8f8f8"/><rect x="4.27" y="62.2" width="51.83" height="14.37" fill="#c9c9c9"/><rect x="4.27" y="72.65" width="33.53" height="3.92" fill="#ededed"/><polygon points="19.51,64.81 22.13,62.2 37.8,62.63 38.68,68.29 36.93,74.39 34.32,70.03 31.71,74.83 29.53,70.03 26.48,74.39 24.74,69.16 22.13,72.65 21.69,67.42" fill="#111"/><rect x="39.11" y="62.63" width="16.99" height="13.94" fill="#b9b9b9"/><polygon points="39.55,65.68 48.26,63.07 55.23,65.68 56.1,76.57 41.29,76.57" fill="#d4d4d4"/><rect x="45.64" y="70.91" width="6.1" height="5.66" fill="#555"/><polyline points="7.32,70.91 15.16,70.03" fill="none" stroke="#666" stroke-width="0.5"/></g></g></svg>
<div class="a t" style="top:927.8px;height:20px;line-height:20px;font-size:13.75px;color:#fff;letter-spacing:-0.007px;left:113.4px;">DM_20250516084311_008.WEBP</div>
</div></div>
<div class="a" style="left:357px;top:72px;width:8px;height:911px;background:#3a3a3a;border:1px solid #555;border-radius:3px;"></div>
<div class="a" style="left:1157px;top:72px;width:8px;height:911px;background:#3a3a3a;border:1px solid #555;border-radius:3px;"></div>
<div class="a" style="left:374px;top:81px;width:774px;height:773px;background:#333333;border:1px solid #454545;"></div>
<!--PAGE-->
<div class="a" style="left:374px;top:866px;width:774px;height:10px;background:#3a3a3a;border:1px solid #4a4a4a;border-radius:5px;"></div>
<div class="a" style="left:374px;top:864px;width:142px;height:14px;background:#4caf50;border-radius:7px;"></div>
<div class="a" style="left:505.5px;top:862.5px;width:17px;height:17px;background:#47a84b;border:1px solid #3f9643;border-radius:8.5px;"></div>
<div class="a" style="left:374px;top:888px;width:384px;height:40px;background:#2b2b2b;border:1px solid #535353;border-radius:4px;"></div>
<div class="a t" style="top:899px;height:20px;line-height:20px;font-size:12px;color:#ddd;letter-spacing:-0.049px;left:529.2px;">Предыдущее</div>
<div class="a" style="left:764px;top:888px;width:384px;height:40px;background:#2b2b2b;border:1px solid #535353;border-radius:4px;"></div>
<div class="a t" style="top:899px;height:20px;line-height:20px;font-size:12px;color:#ddd;letter-spacing:-0.221px;left:922.8px;">Следующее</div>
<div class="a" style="left:374px;top:934px;width:774px;height:40px;background:#2b2b2b;border:1px solid #535353;border-radius:4px;"></div>
<svg class="a" style="left:686.2px;top:949.8px" width="13" height="11" viewBox="0 0 13 11"><path d="M0 1.2Q0 0 1.2 0H4.6L6 1.4H11.8Q13 1.4 13 2.6V9.8Q13 11 11.8 11H1.2Q0 11 0 9.8Z" fill="#f5b400"/><path d="M0 3.2Q0 2.4 1 2.4H12Q13 2.4 13 3.2V9.8Q13 11 11.8 11H1.2Q0 11 0 9.8Z" fill="#ffd54a"/></svg>
<div class="a t" style="top:945px;height:20px;line-height:20px;font-size:12px;color:#fff;letter-spacing:0.094px;left:704.3px;">Загрузить изображения</div>
<div class="a" style="left:1174px;top:93px;width:710px;height:116px;border:1px solid #535353;border-radius:8px;"></div>
<div class="a" style="left:1184px;top:91px;width:141px;height:5px;background:#2b2b2b;"></div>
<div class="a t" style="top:80px;height:20px;line-height:20px;font-size:12px;color:#fff;letter-spacing:0.116px;left:1193.3px;">Настройки обработки</div>
<div class="a t" style="top:114px;height:20px;line-height:20px;font-size:12px;color:#fff;letter-spacing:-0.574px;left:1184.2px;">Язык OCR:</div>
<div class="a" style="left:1358px;top:107px;width:168px;height:32px;background:#2b2b2b;border:1px solid #535353;border-radius:4px;"></div>
<div class="a" style="left:1509px;top:108px;width:16px;height:30px;background:#414141;border-radius:0 3px 3px 0;border-left:1px solid #535353;"></div>
<div class="a t" style="top:113.5px;height:20px;line-height:20px;font-size:12px;color:#fff;letter-spacing:0.182px;left:1364px;">Японский</div>
<div class="a t" style="top:114px;height:20px;line-height:20px;font-size:12px;color:#fff;letter-spacing:-0.320px;left:1532.2px;">Язык перевода:</div>
<div class="a" style="left:1706px;top:107px;width:168px;height:32px;background:#2b2b2b;border:1px solid #535353;border-radius:4px;"></div>
<div class="a" style="left:1857px;top:108px;width:16px;height:30px;background:#414141;border-radius:0 3px 3px 0;border-left:1px solid #535353;"></div>
<div class="a t" style="top:113.5px;height:20px;line-height:20px;font-size:12px;color:#fff;letter-spacing:0.061px;left:1712px;">Русский</div>
<div class="a t" style="top:152px;height:20px;line-height:20px;font-size:12px;color:#fff;letter-spacing:-0.446px;left:1184.2px;">Метод OCR:</div>
<div class="a" style="left:1358px;top:145px;width:168px;height:32px;background:#3a3a3a;border:1px solid #4caf50;border-radius:4px;"></div>
<div class="a" style="left:1509px;top:146px;width:16px;height:30px;background:#414141;border-radius:0 3px 3px 0;border-left:1px solid #535353;"></div>
<div class="a t" style="top:151.5px;height:20px;line-height:20px;font-size:12px;color:#fff;letter-spacing:-0.266px;left:1364px;">MangaOCR</div>
<div class="a t" style="top:152px;height:20px;line-height:20px;font-size:12px;color:#fff;letter-spacing:-0.267px;left:1532.2px;">Сервис перевода:</div>
<div class="a" style="left:1706px;top:145px;width:168px;height:32px;background:#2b2b2b;border:1px solid #535353;border-radius:4px;"></div>
<div class="a" style="left:1857px;top:146px;width:16px;height:30px;background:#414141;border-radius:0 3px 3px 0;border-left:1px solid #535353;"></div>
<div class="a t" style="top:151.5px;height:20px;line-height:20px;font-size:12px;color:#fff;letter-spacing:0.092px;left:1712px;">ИИ Переводчик</div>
<div class="a t" style="top:182px;height:20px;line-height:20px;font-size:11.5px;color:#4caf50;font-weight:700;letter-spacing:0.019px;left:1362.4px;">Баланс: 89,870 токенов</div>
<div class="a t" style="top:182px;height:20px;line-height:20px;font-size:12px;color:#ddd;left:1504.5px;">|</div>
<div class="a t" style="top:182px;height:20px;line-height:20px;font-size:11.5px;color:#ff9800;font-weight:700;letter-spacing:0.102px;left:1517.5px;">Использовано за сессию: 1034</div>
<div class="a" style="left:1174px;top:215px;width:710px;height:40px;background:#2b2b2b;border:1px solid #535353;border-radius:4px;"></div>
<div class="a t" style="top:226px;height:20px;line-height:20px;font-size:12px;color:#fff;letter-spacing:0.228px;left:1464.2px;-webkit-text-stroke:.25px #fff;">Автоматический поиск</div>
<div class="a" style="left:1174px;top:294px;width:710px;height:680px;background:#333333;border:1px solid #555555;border-radius:5px;border-top-left-radius:0;"></div>
<div class="a" style="left:1183px;top:303px;width:693px;height:663px;background:#2b2b2b;"></div>
<div class="a" style="left:1174px;top:261px;width:138px;height:34px;background:#3c3c3c;border:1px solid #555555;border-radius:5px 5px 0 0;"></div>
<div class="a t" style="top:269px;height:20px;line-height:20px;font-size:12px;color:#ccc;letter-spacing:-0.315px;left:1221.4px;">Главная</div>
<div class="a" style="left:1315px;top:261px;width:138px;height:34px;background:#3c3c3c;border:1px solid #555555;border-radius:5px 5px 0 0;"></div>
<div class="a t" style="top:269px;height:20px;line-height:20px;font-size:12px;color:#ccc;letter-spacing:-0.276px;left:1344.3px;">Редактировать</div>
<div class="a" style="left:1456px;top:261px;width:138px;height:34px;background:#3c3c3c;border:1px solid #555555;border-radius:5px 5px 0 0;"></div>
<div class="a t" style="top:269px;height:20px;line-height:20px;font-size:12px;color:#ccc;letter-spacing:-0.197px;left:1497.4px;">Ассистент</div>
<div class="a" style="left:1597px;top:261px;width:138px;height:34px;background:#4caf50;border:1px solid #4caf50;border-radius:5px 5px 0 0;"></div>
<div class="a t" style="top:270px;height:20px;line-height:20px;font-size:12px;color:#fff;letter-spacing:0.088px;left:1622px;">Доп. Настройки</div>
<div class="a" style="left:1192px;top:324px;width:674px;height:94px;border:1px solid #535353;border-radius:8px;"></div>
<div class="a" style="left:1201.5px;top:322px;width:75.7px;height:5px;background:#2b2b2b;"></div>
<div class="a t" style="top:311px;height:20px;line-height:20px;font-size:12px;color:#fff;letter-spacing:0.231px;left:1210.8px;">Основное</div>
<div class="a t" style="top:345px;height:20px;line-height:20px;font-size:12px;color:#fff;letter-spacing:0.025px;left:1202.3px;">Сортировка при поиске:</div>
<div class="a" style="left:1367px;top:338px;width:159px;height:32px;background:#2b2b2b;border:1px solid #535353;border-radius:4px;"></div>
<div class="a" style="left:1509px;top:339px;width:16px;height:30px;background:#414141;border-radius:0 3px 3px 0;border-left:1px solid #535353;"></div>
<div class="a t" style="top:344.5px;height:20px;line-height:20px;font-size:12px;color:#fff;letter-spacing:-0.287px;left:1373.4px;">Сверху вниз</div>
<div class="a t" style="top:345px;height:20px;line-height:20px;font-size:12px;color:#fff;letter-spacing:-0.249px;left:1532.2px;">Переводить:</div>
<div class="a" style="left:1697px;top:338px;width:159px;height:32px;background:#2b2b2b;border:1px solid #535353;border-radius:4px;"></div>
<div class="a" style="left:1839px;top:339px;width:16px;height:30px;background:#414141;border-radius:0 3px 3px 0;border-left:1px solid #535353;"></div>
<div class="a t" style="top:344.5px;height:20px;line-height:20px;font-size:12px;color:#fff;letter-spacing:-0.251px;left:1703.3px;">Все области</div>
<div class="a t" style="top:383px;height:20px;line-height:20px;font-size:12px;color:#fff;letter-spacing:-0.140px;left:1202.3px;">Модель детекции:</div>
<div class="a" style="left:1367px;top:376px;width:159px;height:32px;background:#2b2b2b;border:1px solid #535353;border-radius:4px;"></div>
<div class="a" style="left:1509px;top:377px;width:16px;height:30px;background:#414141;border-radius:0 3px 3px 0;border-left:1px solid #535353;"></div>
<div class="a t" style="top:382.5px;height:20px;line-height:20px;font-size:12px;color:#fff;letter-spacing:0.080px;left:1373.4px;">Публичная</div>
<div class="a" style="left:1192px;top:436px;width:674px;height:56px;border:1px solid #535353;border-radius:8px;"></div>
<div class="a" style="left:1201.5px;top:434px;width:116.6px;height:5px;background:#2b2b2b;"></div>
<div class="a t" style="top:423px;height:20px;line-height:20px;font-size:12px;color:#fff;letter-spacing:0.145px;left:1210.8px;">Форматирование</div>
<div class="a t" style="top:457px;height:20px;line-height:20px;font-size:12px;color:#fff;letter-spacing:0.113px;left:1202.2px;">Формат шапки:</div>
<div class="a" style="left:1532px;top:450px;width:324px;height:32px;background:#2b2b2b;border:1px solid #535353;border-radius:4px;"></div>
<div class="a" style="left:1839px;top:451px;width:16px;height:30px;background:#414141;border-radius:0 3px 3px 0;border-left:1px solid #535353;"></div>
<div class="a t" style="top:456.5px;height:20px;line-height:20px;font-size:12px;color:#fff;letter-spacing:0.155px;left:1538px;">Отключить</div>
<div class="a" style="left:1192px;top:510px;width:674px;height:102px;border:1px solid #535353;border-radius:8px;"></div>
<div class="a" style="left:1202px;top:508px;width:89px;height:5px;background:#2b2b2b;"></div>
<div class="a t" style="top:497px;height:20px;line-height:20px;font-size:12px;color:#fff;letter-spacing:0.225px;left:1211.3px;">ИИ Функции</div>
<div class="a" style="left:1202px;top:533px;width:22px;height:22px;background:#4caf50;border-radius:3px;"></div>
<div class="a t" style="top:535px;height:20px;line-height:20px;font-size:12px;color:#fff;letter-spacing:0.182px;left:1232px;">Дополнительный промпт</div>
<div class="a" style="left:1532px;top:524px;width:324px;height:40px;background:#2b2b2b;border:1px solid #535353;border-radius:4px;"></div>
<svg class="a" style="left:1687px;top:537.8px" width="14" height="14" viewBox="-7 -7 14 14"><g fill="#b9b4c8"><rect x="-1.5" y="-6.6" width="3" height="3" rx=".6" transform="rotate(0)"/><rect x="-1.5" y="-6.6" width="3" height="3" rx=".6" transform="rotate(45)"/><rect x="-1.5" y="-6.6" width="3" height="3" rx=".6" transform="rotate(90)"/><rect x="-1.5" y="-6.6" width="3" height="3" rx=".6" transform="rotate(135)"/><rect x="-1.5" y="-6.6" width="3" height="3" rx=".6" transform="rotate(180)"/><rect x="-1.5" y="-6.6" width="3" height="3" rx=".6" transform="rotate(225)"/><rect x="-1.5" y="-6.6" width="3" height="3" rx=".6" transform="rotate(270)"/><rect x="-1.5" y="-6.6" width="3" height="3" rx=".6" transform="rotate(315)"/><circle r="5"/></g><circle r="2.9" fill="#8f8aa6"/><circle r="1.5" fill="#e9e6f2"/></svg>
<div class="a t" style="top:577px;height:20px;line-height:20px;font-size:12px;color:#fff;letter-spacing:-0.194px;left:1202.2px;">Варианты ИИ перевода:</div>
<div class="a" style="left:1532px;top:570px;width:324px;height:32px;background:#2b2b2b;border:1px solid #535353;border-radius:4px;"></div>
<div class="a" style="left:1839px;top:571px;width:16px;height:30px;background:#414141;border-radius:0 3px 3px 0;border-left:1px solid #535353;"></div>
<div class="a t" style="top:576.5px;height:20px;line-height:20px;font-size:11.5px;color:#fff;left:1538px;">3</div>
<div class="a" style="left:1192px;top:630px;width:674px;height:54px;border:1px solid #535353;border-radius:8px;"></div>
<div class="a" style="left:1202px;top:628px;width:77.8px;height:5px;background:#2b2b2b;"></div>
<div class="a t" style="top:617px;height:20px;line-height:20px;font-size:12px;color:#fff;letter-spacing:-0.172px;left:1211.3px;">Ассистент</div>
<div class="a t" style="top:650px;height:20px;line-height:20px;font-size:12px;color:#fff;letter-spacing:0.041px;left:1202.2px;">Контекстных сообщений:</div>
<div class="a" style="left:1367px;top:644px;width:159px;height:30px;background:#3a3a3a;border:1px solid #3a3a3a;border-radius:4px;"></div>
<div class="a" style="left:1509px;top:645px;width:16px;height:28px;background:#434343;border-radius:0 3px 3px 0;"></div>
<div class="a t" style="top:649.5px;height:20px;line-height:20px;font-size:11px;color:#fff;letter-spacing:-0.450px;left:1378.4px;">12</div>
<div class="a t" style="top:650px;height:20px;line-height:20px;font-size:12px;color:#fff;letter-spacing:-0.031px;left:1532.5px;">Контекстных символов:</div>
<div class="a" style="left:1697px;top:644px;width:159px;height:30px;background:#3a3a3a;border:1px solid #3a3a3a;border-radius:4px;"></div>
<div class="a" style="left:1839px;top:645px;width:16px;height:28px;background:#434343;border-radius:0 3px 3px 0;"></div>
<div class="a t" style="top:649.5px;height:20px;line-height:20px;font-size:11px;color:#fff;letter-spacing:-0.223px;left:1708.5px;">12000</div>
<svg class="a" style="left:482px;top:82px" width="130" height="772" viewBox="482 82 130 772">
<defs>
<linearGradient id="p1" x1="0" x2="1"><stop offset="0" stop-color="#c2c2c2"/><stop offset="1" stop-color="#e6e6e6"/></linearGradient>
<linearGradient id="p3" x1="0" x2="1"><stop offset="0" stop-color="#bdbdbd"/><stop offset=".5" stop-color="#dadada"/><stop offset="1" stop-color="#e6e6e6"/></linearGradient>
</defs>
<rect x="482" y="82" width="130" height="772" fill="#fff"/>
<rect x="500" y="123" width="120" height="209.5" fill="url(#p1)" stroke="#111" stroke-width="1.6"/>
<path d="M551 148Q537 157 530 184Q527 198 519.5 214Q529 206 533 195Q531 214 532.500 232Q536 212 540 204Q540 234 543.500 256Q545 232 551 216Z" fill="#ececec" stroke="#2a2a2a" stroke-width=".7"/>
<g fill="none" stroke="#333" stroke-width=".6"><path d="M551 158Q541 166 535 190M551 170Q544 180 541 200M547 178Q543 190 544 214M538 176q-5 8-6 18"/></g>
<path d="M512.500 332.500Q531 320 551 315V332.500Z" fill="#f3f3f3" stroke="#2a2a2a" stroke-width=".7"/>
<path d="M544 332l5-12" stroke="#444" stroke-width=".5"/>
<rect x="482" y="348" width="140" height="166" fill="#ababab" stroke="#111" stroke-width="1.4"/>
<g stroke="#505050" stroke-width=".6" fill="none">
<rect x="490" y="349" width="10.5" height="164" fill="#cdcdcd" stroke="none"/>
<path d="M490 349v164M492.500 349v164M495 349v164M498 349v164M500.500 349v164"/>
<rect x="524" y="349" width="15" height="130" fill="#cbcbcb" stroke="none"/>
<path d="M524 349v128M527 349v122M531 349v116M535.500 349v108M539 349v102"/>
</g>
<path d="M502 514q2-16 12-30q14-24 37-44v74z" fill="#000"/>
<path d="M502 514q2-16 12-30q14-24 37-44" fill="none" stroke="#6a6a6a" stroke-width="1.600" stroke-dasharray=".8 .8"/>
<rect x="482" y="530.5" width="140" height="330" fill="url(#p3)"/>
<path d="M482 530.5h140" stroke="#111" stroke-width="1.4"/>
<path d="M560 557Q504 552 495 596Q489 648 516 668L560 673Z" fill="#fff" stroke="#222" stroke-width=".8"/>
<rect x="487.5" y="552.5" width="120" height="118" fill="none" stroke="#e3000f" stroke-width="1.6"/>
<path d="M560 667Q516 662 497 684Q480 704 483 738Q487 778 522 793L560 796Z" fill="#fff" stroke="#222" stroke-width=".8"/>
<rect x="482" y="664.5" width="125" height="131.5" fill="none" stroke="#0cf01c" stroke-width="2.6" rx="2"/>
<rect x="491" y="555.5" width="13" height="20" fill="#333"/>
<rect x="485" y="668" width="13" height="19.5" fill="#333"/>
<g font-family="'Liberation Sans',sans-serif" font-weight="700" font-size="13" fill="#fff" text-anchor="middle"><text x="497.5" y="571">7</text><text x="491.5" y="682.5">8</text></g>
<g font-family="'Liberation Sans','Noto Sans CJK JP',sans-serif" font-weight="700" font-size="12.5" fill="#111" style="writing-mode:vertical-rl" >
<text x="541" y="564" writing-mode="vertical-rl" letter-spacing="0.2">我慢してやっても</text>
<text x="520.5" y="564" writing-mode="vertical-rl" letter-spacing="0.2">よいが</text>
</g>
<path d="M520.5 605V630" stroke="#111" stroke-width="1.5"/>
<g font-family="'Liberation Serif','Noto Serif CJK JP','Noto Serif CJK SC',serif" font-weight="900" font-size="16.5" fill="#111">
<text x="543" y="690" writing-mode="vertical-rl">勝手なこと</text>
<text x="520.5" y="692" writing-mode="vertical-rl">をするな</text>
</g>
</svg>
<div class="a" style="left:548.4px;top:53px;width:601.6px;height:832px;border-radius:8px;background:#2b2b2b;box-shadow:0 0 0 1px #3d3d3d inset,0 18px 44px 2px rgba(0,0,0,.66),0 0 16px rgba(0,0,0,.4);overflow:hidden;"><div class="a" style="left:0;top:0;width:601.6px;height:31px;background:linear-gradient(90deg,#1f222b 0%,#1f222b 30%,#1b2031 100%);"></div><div class="a" style="left:0;top:0;width:601.6px;height:832px;border-radius:8px;border:1px solid #454545;"></div></div>
<svg class="a" style="left:556.8px;top:60px" width="15" height="15" viewBox="-7.5 -7.5 15 15"><circle r="7.2" fill="#050607"/><path d="M-3.900 -4.500q-3.200 4.200 .5 8.500" fill="none" stroke="#c2c5c7" stroke-width="1.150" stroke-linecap="round"/><path d="M3.900 -4.500q3.200 4.200 -.5 8.500" fill="none" stroke="#c2c5c7" stroke-width="1.150" stroke-linecap="round"/><circle cx="0" cy="-2.300" r="1.800" fill="#8fc3d8"/><path d="M-1.300 -.9h2.600l-.6 5h-1.400z" fill="#14a4d2"/></svg>
<div class="a t" style="top:59.400000000000006px;height:20px;line-height:20px;font-size:12px;color:#fff;letter-spacing:0.030px;left:578.6px;">Конфигурации дополнительного промпта</div>
<svg class="a" style="left:1128.5px;top:62.2px" width="11" height="11" viewBox="0 0 11 11"><path d="M.7 .7l9.600 9.600M10.300 .7l-9.600 9.600" stroke="#fff" stroke-width="1.1" fill="none"/></svg>
<div class="a" style="left:560px;top:107px;width:578px;height:351px;border:1px solid #535353;border-radius:8px;"></div>
<div class="a" style="left:570.1px;top:105px;width:176.9px;height:5px;background:#2b2b2b;"></div>
<div class="a t" style="top:94px;height:20px;line-height:20px;font-size:12px;color:#fff;letter-spacing:0.141px;left:579.4px;">Пользовательские промпты</div>
<div class="a" style="left:570px;top:121px;width:558px;height:281px;background:#1e1e1e;border:1px solid #535353;border-radius:4px;"></div>
<div class="a" style="left:580px;top:131px;width:538px;height:36px;background:#4caf50;border-radius:4px;"></div>
<svg class="a" style="left:586.2px;top:142.3px" width="17" height="17" viewBox="-8.500 -8.500 17 17"><g><g fill="#ff62c0"><ellipse cx="0" cy="-3.6" rx="2.9" ry="3.4" transform="rotate(0)"/><ellipse cx="0" cy="-3.6" rx="2.9" ry="3.4" transform="rotate(72)"/><ellipse cx="0" cy="-3.6" rx="2.9" ry="3.4" transform="rotate(144)"/><ellipse cx="0" cy="-3.6" rx="2.9" ry="3.4" transform="rotate(216)"/><ellipse cx="0" cy="-3.6" rx="2.9" ry="3.4" transform="rotate(288)"/></g><circle r="2.2" fill="#ff8fd2"/><path d="M0 -2.3l.6 1.5l1.6 .1l-1.2 1l.4 1.6l-1.4-.9l-1.4 .9l.4-1.6l-1.2-1l1.6-.1z" fill="#fff"/></g></svg>
<div class="a t" style="top:140.8px;height:20px;line-height:20px;font-size:13.45px;color:#fff;letter-spacing:0.011px;left:608.2px;">Японская манга (детальный)</div>
<svg class="a" style="left:586.2px;top:188.3px" width="17" height="17" viewBox="-8.500 -8.500 17 17"><g><path d="M-6.5 -4.5q0-1.5 1.5-1.5h10q1.500 0 1.500 1.500v10q0 1.500-1.500 1.500h-10q-1.500 0-1.500-1.500z" fill="#3b9bf5"/><path d="M-4.400 -6v13M4.400 -6v13" stroke="#2b7fd6" stroke-width="1.200"/><path d="M-1.200 -6.200h2.400l1.200 10.400l-2.400 2.400l-2.400-2.400z" fill="#27408f"/><path d="M-4.600 -7.200h3.800l.8 1.600l-3 3.400zM4.600 -7.200h-3.800l-.8 1.600l3 3.400z" fill="#f6f8fa"/></g></svg>
<div class="a t" style="top:186.8px;height:20px;line-height:20px;font-size:13.45px;color:#f2f2f2;letter-spacing:-0.004px;left:608.2px;">Корейская манхва (детальный)</div>
<svg class="a" style="left:586.2px;top:234.3px" width="17" height="17" viewBox="-8.500 -8.500 17 17"><g><circle r="6.800" fill="#f7eef1"/><circle r="6.800" fill="none" stroke="#e6d3da" stroke-width=".8"/><path d="M.8 .6q-1.400-1.200-2.200 .2q-.5 2 1.700 2.500q2.900 .1 3-2.800q-.3-3.400-3.800-3.400q-3.400 .5-3.300 4" fill="none" stroke="#f0364a" stroke-width="1.150" stroke-linecap="round"/></g></svg>
<div class="a t" style="top:232.8px;height:20px;line-height:20px;font-size:13.45px;color:#f2f2f2;letter-spacing:0.158px;left:608.2px;">Японская манга (упрощенный)</div>
<svg class="a" style="left:586.2px;top:280.3px" width="17" height="17" viewBox="-8.500 -8.500 17 17"><g><path d="M.4 -7.200v4" stroke="#8a5bd6" stroke-width="1.400"/><path d="M-5 -3.400h10l-1.200 9.600q-.2 1-1.200 1h-5.200q-1 0-1.200-1z" fill="#f2a65a"/><path d="M-5.400 -4.200h10.800v1.800h-10.800z" fill="#e6e9ee"/><path d="M-4.300 1.500h8.600l-.5 4.700q-.2 1-1.200 1h-5.200q-1 0-1.200-1z" fill="#e58a3c"/><circle cx="-1.800" cy="4.800" r=".9" fill="#6b3a1a"/><circle cx="1.600" cy="4.800" r=".9" fill="#6b3a1a"/><circle cx="0" cy="3" r=".8" fill="#6b3a1a"/></g></svg>
<div class="a t" style="top:278.8px;height:20px;line-height:20px;font-size:13.45px;color:#f2f2f2;letter-spacing:0.148px;left:608.2px;">Корейская манхва (упрощенный)</div>
<div class="a" style="left:570px;top:408px;width:182px;height:40px;background:#2b2b2b;border:1px solid #535353;border-radius:4px;"></div>
<div class="a t" style="top:419px;height:20px;line-height:20px;font-size:12px;color:#fff;letter-spacing:0.179px;left:633.9px;-webkit-text-stroke:.25px #fff;">Добавить</div>
<div class="a" style="left:758px;top:408px;width:182px;height:40px;background:#2b2b2b;border:1px solid #535353;border-radius:4px;"></div>
<div class="a t" style="top:419px;height:20px;line-height:20px;font-size:12px;color:#fff;letter-spacing:-0.034px;left:807.8px;-webkit-text-stroke:.25px #fff;">Редактировать</div>
<div class="a" style="left:946px;top:408px;width:182px;height:40px;background:#2b2b2b;border:1px solid #535353;border-radius:4px;"></div>
<div class="a t" style="top:419px;height:20px;line-height:20px;font-size:12px;color:#fff;letter-spacing:-0.271px;left:1015.1px;-webkit-text-stroke:.25px #fff;">Удалить</div>
<div class="a" style="left:560px;top:476px;width:578px;height:351px;border:1px solid #535353;border-radius:8px;"></div>
<div class="a" style="left:570.1px;top:474px;width:112px;height:5px;background:#2b2b2b;"></div>
<div class="a t" style="top:463px;height:20px;line-height:20px;font-size:12px;color:#fff;letter-spacing:0.114px;left:579.4px;">Текущий промпт</div>
<div class="a" style="left:570px;top:490px;width:558px;height:327px;background:#2b2b2b;border:1px solid #535353;border-radius:4px;"></div>
<div class="a" style="left:1109px;top:499px;width:10px;height:265px;background:#666;border-radius:5px;"></div>
<div class="a t" style="top:504px;height:16px;line-height:16px;font-size:12px;color:#fff;letter-spacing:0.056px;left:583.3px;">Ты переводишь японскую мангу. Учитывай следующие особенности:</div>
<div class="a t" style="top:536px;height:16px;line-height:16px;font-size:12px;color:#fff;letter-spacing:-0.172px;left:583.3px;">СТИЛЬ И ТОН:</div>
<div class="a t" style="top:552px;height:16px;line-height:16px;font-size:12px;color:#fff;letter-spacing:0.031px;left:583.3px;">• Сохраняй эмоциональную окраску оригинала - от драматичных моментов до комедийных</div>
<div class="a t" style="top:568px;height:16px;line-height:16px;font-size:12px;color:#fff;letter-spacing:-0.016px;left:583.3px;">сцен</div>
<div class="a t" style="top:584px;height:16px;line-height:16px;font-size:12px;color:#fff;letter-spacing:0.060px;left:583.3px;">• Используй соответствующий уровень вежливости (от грубой речи янки до формального</div>
<div class="a t" style="top:600px;height:16px;line-height:16px;font-size:12px;color:#fff;letter-spacing:0.231px;left:583.3px;">кейго)</div>
<div class="a t" style="top:616px;height:16px;line-height:16px;font-size:12px;color:#fff;letter-spacing:0.057px;left:583.3px;">• Адаптируй звукоподражания (ономатопею): <span class=k>どきどき</span> <span class=w>→</span> *тук-тук* (сердцебиение), <span class=k>ざわざわ</span> <span class=w>→</span></div>
<div class="a t" style="top:632px;height:16px;line-height:16px;font-size:12px;color:#fff;letter-spacing:0.609px;left:583.3px;">*шум-гам*</div>
<div class="a t" style="top:648px;height:16px;line-height:16px;font-size:12px;color:#fff;letter-spacing:-0.089px;left:583.3px;">• Сохраняй характерные речевые особенности персонажей (диалект, заикание, акцент)</div>
<div class="a t" style="top:680px;height:16px;line-height:16px;font-size:12px;color:#fff;letter-spacing:-0.270px;left:583.3px;">КУЛЬТУРНАЯ АДАПТАЦИЯ:</div>
<div class="a t" style="top:696px;height:16px;line-height:16px;font-size:12px;color:#fff;letter-spacing:-0.006px;left:583.3px;">• Японские суффиксы: -сан, -кун, -чан, -сама, -сэнпай, -кохай оставляй как есть</div>
<div class="a t" style="top:712px;height:16px;line-height:16px;font-size:12px;color:#fff;letter-spacing:-0.057px;left:583.3px;">• Школьная система: старшая школа (10-12 классы), клубы (буквы), фестивали</div>
<div class="a t" style="top:728px;height:16px;line-height:16px;font-size:12px;color:#fff;letter-spacing:-0.060px;left:583.3px;">• Еда: рамен, бенто, онигири, моти - оставляй оригинальные названия</div>
<div class="a t" style="top:744px;height:16px;line-height:16px;font-size:12px;color:#fff;letter-spacing:-0.107px;left:583.3px;">• Не переводи: сакура, катана, кимоно, юката, додзё, сэнсэй</div>
<div class="a t" style="top:776px;height:16px;line-height:16px;font-size:12px;color:#fff;letter-spacing:-0.533px;left:583.3px;">ЖАНРОВЫЕ ОСОБЕННОСТИ:</div>
<div class="a t" style="top:792px;height:16px;line-height:16px;font-size:12px;color:#fff;letter-spacing:-0.013px;left:583.3px;">• Сёнэн: энергичная речь, боевые выкрики, дружба и преодоление</div>
<div class="a" style="left:948px;top:833px;width:92px;height:40px;background:#5cbf60;border:1px solid #4bab50;border-radius:4.5px;"></div>
<div class="a t" style="top:844px;height:20px;line-height:20px;font-size:12px;color:#fff;letter-spacing:0.111px;left:962.4px;-webkit-text-stroke:.25px #fff;">Применить</div>
<div class="a" style="left:1046px;top:833px;width:92px;height:40px;background:#2b2b2b;border:1px solid #535353;border-radius:4px;"></div>
<div class="a t" style="top:844px;height:20px;line-height:20px;font-size:12px;color:#fff;letter-spacing:-0.193px;left:1071px;-webkit-text-stroke:.25px #fff;">Отмена</div>
</body></html>
